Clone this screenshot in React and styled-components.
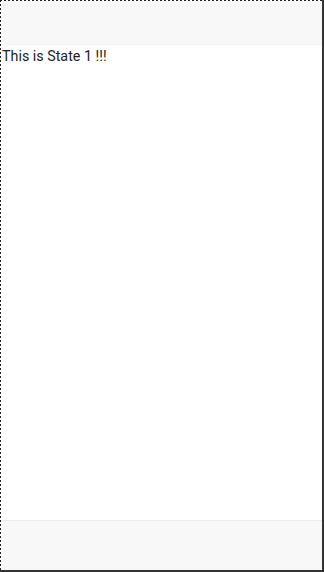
import React from 'react'
import styled, { createGlobalStyle } from 'styled-components'

const Global = createGlobalStyle`
  html, body { margin: 0; padding: 0; background: #fff; }
  * { box-sizing: border-box; }
`

// 2px-on / 2px-off dashes along the top and left edges
const Frame = styled.div`
  width: 324px;
  height: 572px;
  display: flex;
  flex-direction: column;
  padding: 1px 0 0 1px;
  border-right: 2px solid #333;
  border-bottom: 2px solid #333;
  background-color: #fff;
  background-image:
    linear-gradient(to bottom, #222 50%, transparent 50%),
    linear-gradient(to right, #222 50%, transparent 50%);
  background-size: 1px 4px, 4px 1px;
  background-repeat: repeat-y, repeat-x;
  background-position: 0 0, 0 0;
  font-family: Roboto, "Noto Sans", sans-serif;
`

const Bar = styled.div`
  flex: 0 0 ${p => p.$h}px;
  background: #f8f8f8;
  ${p => p.$top ? 'border-top: 1px solid #ececec;' : 'border-bottom: 1px solid #f1f1f1;'}
`

const Content = styled.main`
  flex: 1;
  padding: 1px 1px;
  background: #fff;
  font-size: 14.3px;
  line-height: 20px;
  color: #222;
`

export default function App() {
  return (
    <>
      <Global />
      <Frame>
        <Bar $h={44} />
        <Content>This is State 1 !!!</Content>
        <Bar $h={50} $top />
      </Frame>
    </>
  )
}
